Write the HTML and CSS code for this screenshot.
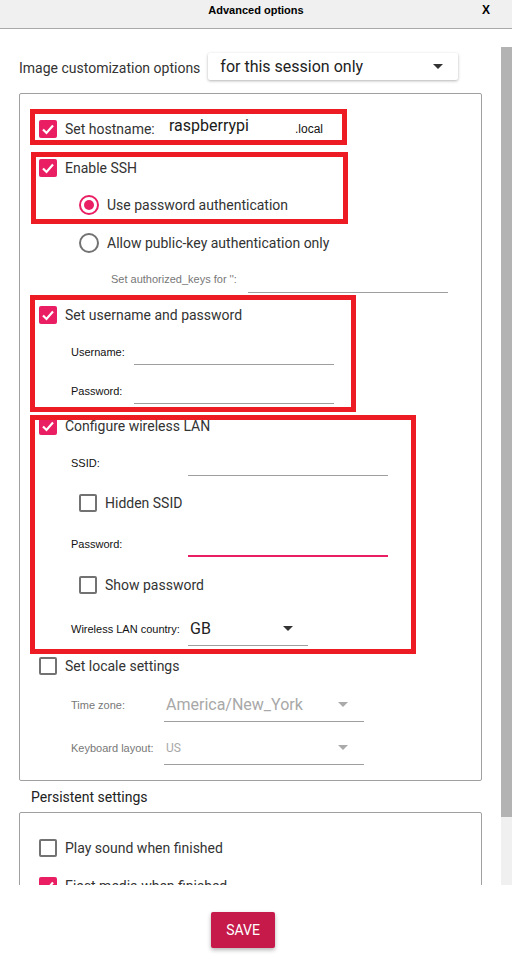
FILE: index.html
```html
<!DOCTYPE html>
<html>
<head>
<meta charset="utf-8">
<title>Advanced options</title>
<link rel="stylesheet" href="styles.css">
</head>
<body>
<header class="titlebar">
  <span></span>
  <span class="title">Advanced options</span>
  <span class="close">X</span>
</header>
<div class="body">
  <div class="scroll">
    <div class="content">
      <div class="opt-row">
        <span class="opt-label">Image customization options</span>
        <div class="combo combo-session"><span>for this session only</span><span class="arrow"></span></div>
      </div>

      <div class="group group-main">
        <div class="row row-cb">
          <span class="cb on"><svg viewBox="0 0 18 18"><polyline points="4,9.5 7.5,13 14,5.5"/></svg></span>
          <span class="txt host-label">Set hostname:</span>
          <span class="host-input">raspberrypi</span>
          <span class="host-suffix">.local</span>
        </div>
        <div class="row row-cb mt21">
          <span class="cb on"><svg viewBox="0 0 18 18"><polyline points="4,9.5 7.5,13 14,5.5"/></svg></span>
          <span class="txt">Enable SSH</span>
        </div>
        <div class="row row-radio mt18">
          <span class="radio on"></span>
          <span class="txt">Use password authentication</span>
        </div>
        <div class="row row-radio mt18">
          <span class="radio"></span>
          <span class="txt">Allow public-key authentication only</span>
        </div>
        <div class="row row-keys mt12">
          <span class="lbl muted keys-label">Set authorized_keys for '':</span>
          <span class="field field-keys"></span>
        </div>
        <div class="row row-cb mt13">
          <span class="cb on"><svg viewBox="0 0 18 18"><polyline points="4,9.5 7.5,13 14,5.5"/></svg></span>
          <span class="txt">Set username and password</span>
        </div>
        <div class="row row-field mt14">
          <span class="lbl lbl-user">Username:</span>
          <span class="field"></span>
        </div>
        <div class="row row-field mt12">
          <span class="lbl lbl-user">Password:</span>
          <span class="field"></span>
        </div>
        <div class="row row-cb mt13">
          <span class="cb on"><svg viewBox="0 0 18 18"><polyline points="4,9.5 7.5,13 14,5.5"/></svg></span>
          <span class="txt">Configure wireless LAN</span>
        </div>
        <div class="row row-field mt14">
          <span class="lbl lbl-wifi">SSID:</span>
          <span class="field"></span>
        </div>
        <div class="row row-subcb mt18">
          <span class="cb"></span>
          <span class="txt">Hidden SSID</span>
        </div>
        <div class="row row-field mt18">
          <span class="lbl lbl-wifi">Password:</span>
          <span class="field field-focus"></span>
        </div>
        <div class="row row-subcb mt19">
          <span class="cb"></span>
          <span class="txt">Show password</span>
        </div>
        <div class="row row-field mt17">
          <span class="lbl lbl-wifi">Wireless LAN country:</span>
          <span class="combo combo-line combo-country"><span>GB</span><span class="arrow"></span></span>
        </div>
        <div class="row row-cb mt11">
          <span class="cb"></span>
          <span class="txt">Set locale settings</span>
        </div>
        <div class="row row-field mt12">
          <span class="lbl muted lbl-locale">Time zone:</span>
          <span class="combo combo-line combo-locale disabled"><span class="tz">America/New_York</span><span class="arrow"></span></span>
        </div>
        <div class="row row-field mt9">
          <span class="lbl muted lbl-locale">Keyboard layout:</span>
          <span class="combo combo-line combo-locale combo-kb disabled"><span class="kb">US</span><span class="arrow"></span></span>
        </div>
      </div>

      <div class="section-title">Persistent settings</div>

      <div class="group group-persist">
        <div class="row row-cb">
          <span class="cb"></span>
          <span class="txt">Play sound when finished</span>
        </div>
        <div class="row row-cb mt20">
          <span class="cb on"><svg viewBox="0 0 18 18"><polyline points="4,9.5 7.5,13 14,5.5"/></svg></span>
          <span class="txt">Eject media when finished</span>
        </div>
      </div>

      <div class="mark mark-host"></div>
      <div class="mark mark-ssh"></div>
      <div class="mark mark-user"></div>
      <div class="mark mark-wifi"></div>
    </div>
  </div>
  <div class="scrollbar"><div class="thumb"></div></div>
</div>
<footer class="footer">
  <button class="save">SAVE</button>
</footer>
</body>
</html>
```

FILE: styles.css
```css
* { box-sizing: border-box; }

body {
  margin: 0;
  width: 512px;
  height: 957px;
  overflow: hidden;
  background: #ffffff;
  font-family: Roboto, "Noto Sans", sans-serif;
  color: #333333;
}

.titlebar {
  height: 29px;
  background: #f0f0f0;
  border-bottom: 1px solid #a9a9a9;
  display: grid;
  grid-template-columns: 1fr auto 1fr;
  align-items: start;
  padding-top: 4px;
  font-family: "Liberation Sans", Arial, sans-serif;
  font-weight: bold;
  font-size: 11px;
  line-height: 13px;
  color: #000;
}
.close {
  justify-self: end;
  padding-right: 22px;
  font-size: 12px;
}

.body {
  display: flex;
  height: 856px;
}
.scroll {
  width: 501px;
  height: 856px;
  overflow: hidden;
}
.content {
  position: relative;
  padding: 24px 19px 0 19px;
}
.scrollbar {
  width: 11px;
  margin-top: 18px;
  height: 838px;
  background: #f0f0f0;
}
.thumb {
  height: 770px;
  background: #b3b3b3;
}

.opt-row {
  display: flex;
  align-items: center;
  height: 27px;
  gap: 8px;
}
.opt-label {
  font-size: 14px;
  margin-top: 3px;
}

.combo {
  display: flex;
  align-items: center;
  justify-content: space-between;
  font-size: 16px;
  color: #222;
}
.combo-session {
  width: 250px;
  height: 27px;
  background: #fff;
  border-radius: 2px;
  box-shadow: 0 1px 3px rgba(0,0,0,0.3);
  padding: 0 15px 0 12px;
}
.arrow {
  width: 0;
  height: 0;
  border-left: 5px solid transparent;
  border-right: 5px solid transparent;
  border-top: 5px solid #333;
}
.combo-line {
  height: 35px;
  border-bottom: 1px solid #9e9e9e;
  padding: 0 15px 0 2px;
}
.combo-country { width: 120px; }
.combo-locale { width: 200px; padding-right: 16px; }
.combo-kb { height: 34px; }
.combo.disabled { color: #a8a8a8; }
.combo.disabled .arrow { border-top-color: #aaaaaa; }
.kb { font-size: 12px; }

.group {
  border: 1px solid #a0a0a0;
  border-radius: 2px;
}
.group-main {
  margin-top: 13px;
  padding: 26px 0 15px 0;
}
.group-persist {
  margin-top: 7px;
  padding-top: 26px;
  height: 120px;
}

.row {
  display: flex;
  align-items: center;
}
.row-cb { height: 18px; padding-left: 19px; gap: 8px; }
.row-subcb { height: 18px; padding-left: 59px; gap: 8px; }
.row-radio { height: 20px; padding-left: 59px; gap: 8px; }
.row-field { padding-left: 51px; }
.row-keys { padding-left: 91px; }

.mt9 { margin-top: 9px; }
.mt11 { margin-top: 11px; }
.mt12 { margin-top: 12px; }
.mt13 { margin-top: 13px; }
.mt14 { margin-top: 14px; }
.mt17 { margin-top: 17px; }
.mt18 { margin-top: 18px; }
.mt19 { margin-top: 19px; }
.mt20 { margin-top: 20px; }
.mt21 { margin-top: 21px; }

.txt {
  font-size: 14px;
  color: #333;
  white-space: nowrap;
}

.cb {
  width: 18px;
  height: 18px;
  flex: none;
  border: 2px solid #727272;
  border-radius: 2px;
  background: #fff;
}
.cb.on {
  border: none;
  background: #e91e63;
}
.cb svg {
  display: block;
  width: 18px;
  height: 18px;
}
.cb polyline {
  fill: none;
  stroke: #fff;
  stroke-width: 2.2;
}

.radio {
  width: 20px;
  height: 20px;
  flex: none;
  border: 2px solid #727272;
  border-radius: 50%;
  display: flex;
  align-items: center;
  justify-content: center;
}
.radio.on {
  border-color: #e91e63;
}
.radio.on::after {
  content: "";
  width: 10px;
  height: 10px;
  border-radius: 50%;
  background: #e91e63;
}

.host-label { width: 92px; }
.host-input {
  width: 122px;
  padding-left: 4px;
  margin-bottom: 7px;
  font-size: 16px;
  color: #1a1a1a;
}
.host-suffix {
  font-family: "Liberation Sans", Arial, sans-serif;
  font-size: 12px;
  color: #111;
}

.lbl {
  font-family: "Liberation Sans", Arial, sans-serif;
  font-size: 11px;
  color: #111;
  white-space: nowrap;
  flex: none;
}
.lbl.muted { color: #777; }
.lbl-user { width: 63px; }
.lbl-wifi { width: 117px; }
.lbl-locale { width: 93px; }
.keys-label { width: 137px; }

.field {
  display: block;
  width: 200px;
  height: 27px;
  border-bottom: 1px solid #9e9e9e;
}
.field-keys { height: 28px; }
.field-focus { border-bottom: 2px solid #e91e63; }

.section-title {
  margin: 8px 0 0 12px;
  font-size: 14px;
  line-height: 16px;
  color: #222;
}

.mark {
  position: absolute;
  border: 5px solid #ed1c24;
}
.mark-host { left: 30px; top: 80px; width: 317px; height: 36px; }
.mark-ssh { left: 31px; top: 123px; width: 317px; height: 72px; }
.mark-user { left: 30px; top: 266px; width: 326px; height: 117px; }
.mark-wifi { left: 30px; top: 386px; width: 386px; height: 239px; }

.footer {
  display: flex;
  justify-content: center;
  padding: 27px 26px 0 0;
}
.save {
  width: 64px;
  height: 36px;
  border: none;
  border-radius: 2px;
  background: #c51a4a;
  color: #fff;
  font-family: Roboto, "Noto Sans", sans-serif;
  font-size: 14px;
  box-shadow: 0 2px 4px rgba(0,0,0,0.3);
}
```
